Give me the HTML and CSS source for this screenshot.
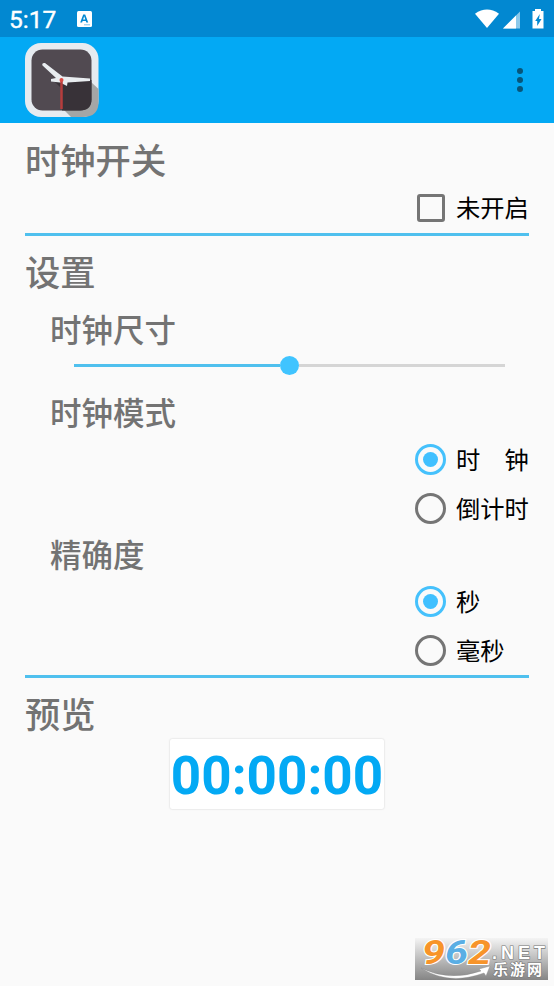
FILE: index.html
```
<!DOCTYPE html>
<html lang="zh-CN">
<head>
<meta charset="utf-8">
<title>时钟</title>
<link rel="stylesheet" href="styles.css">
</head>
<body>
<header class="status">
  <span class="status-time">5:17</span>
  <svg class="status-app" width="15" height="16" viewBox="0 0 15 16"><rect width="15" height="16" rx="1.5" fill="#fff"/><path d="M3.2 11.5 6.2 3.6h2l3 7.9H9.3l-.5-1.5H5.6l-.5 1.5zM6.1 8.5h2.2L7.2 5.3z" fill="#0288d1" fill-rule="evenodd"/><path d="M7.5 13.8h1m1 0h1m1 0h1" stroke="#0288d1"/></svg>
  <svg class="status-icons" width="70" height="22" viewBox="0 0 70 22">
    <path d="M0 5.700Q12-2.500 24 5.700L12 20z" fill="#fff"/>
    <path d="M28 20.500 45 3.500v17z" fill="#fff" fill-opacity=".55"/><path d="M28 20.500 41 7.500V20.500z" fill="#fff"/>
    <path d="M60 1h6v2h2.500v17.500H57.500V3H60z" fill="#fff"/><path d="M64.800 6 60.200 13h2v5L66.500 11H64z" fill="#0288d1"/>
  </svg>
</header>
<div class="appbar">
  <svg class="logo" width="76" height="76" viewBox="0 0 76 76">
    <rect x="1" y="1" width="73.500" height="74" rx="16" fill="#e6ebf0"/>
    <path d="M67 40 74.500 47V60Q74.500 75 59 75H47L38 66z" fill="#a4a6a6"/>
    <rect x="7.500" y="7.500" width="60" height="61" rx="11" fill="#514a51"/>
    <path d="M38 38H67.500V57.500Q67.500 68.500 56 68.500H38z" fill="#383238"/>
    <path d="M29 38 38 47 43 38z" fill="#383238"/>
    <path d="M18.500 23.500Q17.500 20.500 21 21L38.500 34.500 66 36.500v2.500L43.500 40.500 43 44 36 40.500 27 39.500V37L32 36z" fill="#e9edf0"/>
    <path d="M37.500 38V67" stroke="#b63d3c" stroke-width="2.500"/><circle cx="37.500" cy="38" r="2" fill="#d94b45"/>
  </svg>
  <svg class="more" width="8" height="28" viewBox="0 0 8 28"><g fill="#075579"><circle cx="4" cy="5" r="3"/><circle cx="4" cy="14" r="3"/><circle cx="4" cy="23" r="3"/></g></svg>
</div>
<main class="content">
  <h1 class="title">时钟开关</h1>
  <label class="option option-check"><span class="checkbox"></span><span class="label">未开启</span></label>
  <hr class="divider">
  <h1 class="title">设置</h1>
  <h2 class="subtitle subtitle-size">时钟尺寸</h2>
  <div class="slider"><span class="slider-fill"></span><span class="slider-thumb"></span><span class="slider-rest"></span></div>
  <h2 class="subtitle subtitle-mode">时钟模式</h2>
  <label class="option"><span class="radio radio-on"></span><span class="label">时　钟</span></label>
  <label class="option"><span class="radio"></span><span class="label">倒计时</span></label>
  <h2 class="subtitle">精确度</h2>
  <label class="option"><span class="radio radio-on"></span><span class="label">秒</span></label>
  <label class="option"><span class="radio"></span><span class="label">毫秒</span></label>
  <hr class="divider">
  <h1 class="title">预览</h1>
  <div class="preview">00:00:00</div>
</main>
<svg class="watermark" width="133" height="42" viewBox="0 0 133 42">
  <defs><linearGradient id="shade" x2="0" y2="1"><stop stop-color="#f4f4f4"/><stop offset="1" stop-color="#858585"/></linearGradient></defs>
  <rect width="133" height="42" fill="url(#shade)"/>
  <path d="M6 30Q34 44 66 33L64 31 75 28 71 38 69 35Q34 48 6 30z" fill="#fff" stroke="#888" stroke-width=".4"/>
  <g class="wm-number"><text x="7" y="26" textLength="23" lengthAdjust="spacingAndGlyphs" fill="#f7942a">9</text><text x="30" y="26" textLength="23" lengthAdjust="spacingAndGlyphs" fill="#5aaee4">6</text><text x="53" y="26" textLength="23" lengthAdjust="spacingAndGlyphs" fill="#f7942a">2</text></g>
  <text class="wm-net" x="77" y="21" textLength="53">.NET</text>
  <text class="wm-cn" x="78" y="37" textLength="49">乐游网</text>
</svg>
</body>
</html>
```
FILE: styles.css
```
* { box-sizing: border-box; }
body {
  margin: 0;
  height: 986px;
  overflow: hidden;
  background: #fafafa;
  font-family: Roboto, "Noto Sans CJK SC", sans-serif;
}
.status {
  display: flex;
  align-items: center;
  height: 37px;
  padding: 0 10px 0 9px;
  background: #0288d1;
  color: #fff;
}
.status-time { width: 68px; padding-top: 1px; font-size: 24.500px; font-weight: 400; line-height: 37px; -webkit-text-stroke: .4px #fff; }
.status-icons { margin: 0 -1px 0 auto; }
.appbar {
  display: flex;
  align-items: center;
  justify-content: space-between;
  height: 86px;
  padding: 0 30px 0 24px;
  background: #03a9f4;
}
.content { display: flex; flex-direction: column; padding: 14px 25px 0; }
.title, .subtitle {
  margin: 0;
  color: #737373;
  font-family: "Noto Sans CJK SC", sans-serif;
  font-weight: 500;
}
.title { height: 48px; font-size: 35.300px; line-height: 44px; }
.subtitle { height: 44px; padding-left: 25px; font-size: 31.500px; line-height: 41px; }
.subtitle-size { margin-top: 11px; }
.subtitle-mode { margin-top: 13px; }
.divider { width: 100%; height: 3px; margin: 0 0 13px; border: 0; background: #4fc0ee; }
.option { display: flex; align-items: center; height: 49px; padding-left: 390px; }
.option-check { height: 48px; padding-bottom: 2px; }
.label {
  margin: -2px 0 0 10px;
  color: #000;
  font-family: "Noto Sans CJK SC", sans-serif;
  font-size: 24.300px;
  line-height: 30px;
  white-space: nowrap;
}
.checkbox { width: 28px; height: 28px; margin: 0 1px 0 2px; border: 3px solid #757575; border-radius: 3px; }
.radio { display: flex; width: 31px; height: 31px; border: 3px solid #757575; border-radius: 50%; }
.radio-on { border-color: #45c1fc; }
.radio-on::before { content: ""; width: 15px; height: 15px; margin: auto; border-radius: 50%; background: #40c0ff; }
.slider { display: flex; align-items: center; height: 26px; padding: 0 24px 0 49px; }
.slider-fill { width: 206px; height: 3px; background: #4fc0ee; }
.slider-thumb { width: 19px; height: 19px; border-radius: 50%; background: #40c4ff; }
.slider-rest { flex: 1; height: 3px; background: #d5d5d5; }
.preview {
  align-self: center;
  width: 214px;
  height: 70px;
  border-radius: 2px;
  background: #fff;
  box-shadow: 0 0 2px rgba(0, 0, 0, .2);
  color: #03a9f4;
  font-size: 53px;
  font-weight: 700;
  line-height: 74px;
  text-align: center;
}
.watermark { position: absolute; right: 6px; bottom: 6px; }
.wm-number { font: italic 700 33px Roboto, sans-serif; stroke: #fff; stroke-width: 2px; paint-order: stroke; }
.wm-net { font: 700 18px "Liberation Sans", sans-serif; fill: #fff; stroke: #777; stroke-width: 1.200px; paint-order: stroke; }
.wm-cn { font: 700 15px "Noto Sans CJK SC", sans-serif; fill: #fff; stroke: #777; stroke-width: 1.200px; paint-order: stroke; }
```
